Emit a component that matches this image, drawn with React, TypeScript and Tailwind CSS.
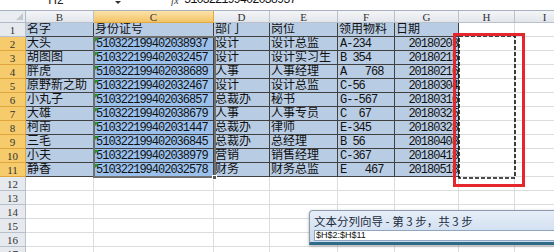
const letters = ["B", "C", "D", "E", "F", "G", "H", "I"];
const titles = ["名字", "身份证号", "部门", "岗位", "领用物料", "日期"];

const rows = [
  ["大头", "510322199402038937", "设计", "设计总监", "A-234", "20180203"],
  ["胡图图", "510322199402032457", "设计", "设计实习生", "B 354", "20180215"],
  ["胖虎", "510322199402038689", "人事", "人事经理", "A   768", "20180216"],
  ["原野新之助", "510322199402032467", "设计", "设计总监", "C-56", "20180304"],
  ["小丸子", "510322199402036857", "总裁办", "秘书", "G--567", "20180316"],
  ["大雄", "510322199402038679", "人事", "人事专员", "C  67", "20180325"],
  ["柯南", "510322199402031447", "总裁办", "律师", "E-345", "20180328"],
  ["三毛", "510322199402036845", "总裁办", "总经理", "B 56", "20180408"],
  ["小夫", "510322199402038979", "营销", "销售经理", "C-367", "20180418"],
  ["静香", "510322199402032578", "财务", "财务总监", "E   467", "20180518"],
];

const rowNums = Array.from({ length: 17 }, (_, i) => i + 1);

function cellValue(r: number, c: number) {
  if (c > 5) return "";
  if (r === 1) return titles[c];
  if (r <= 11) return rows[r - 2][c];
  return "";
}

export default function App() {
  return (
    <div className="relative w-[554px] h-[252px] overflow-hidden bg-white font-['Liberation_Mono','Noto_Sans_CJK_SC',monospace] text-[#111]">
      {/* formula bar, scrolled so only its lower edge shows */}
      <div className="flex h-[11px] overflow-hidden border-b border-[#a7b1be] bg-white">
        <div className="w-[112px] text-center text-[12px] leading-[12px] -mt-[6px] font-['Liberation_Sans',sans-serif] text-[#222]">
          H2
        </div>
        <div className="w-[12px] flex justify-center">
          <div className="mt-[1px] w-0 h-0 border-l-[3px] border-r-[3px] border-t-[3px] border-l-transparent border-r-transparent border-t-[#333]" />
        </div>
        <div className="w-[27px] h-[9px] -mt-[10px] rounded-b-full bg-gradient-to-b from-[#f2f2f2] to-[#c9ced6] border border-[#b5bcc6]" />
        <div className="w-[20px]" />
        <div className="w-[13px] text-[11px] leading-[11px] -mt-[5px] italic font-['Liberation_Serif',serif] text-[#444]">
          fx
        </div>
        <div className="flex-1 text-[12px] leading-[12px] -mt-[6px] tracking-[-1px]">
          510322199402038937
        </div>
      </div>

      {/* sheet grid */}
      <div className="grid grid-cols-[26px_68px_120px_56px_68px_57px_64px_56px_60px] grid-rows-[12px_repeat(17,14px)]">
        <div className="relative border-r border-b border-[#b1bac6] bg-[#e9ecf0]">
          <div className="absolute right-[2px] bottom-[2px] w-0 h-0 border-b-[7px] border-l-[7px] border-b-[#c3c9d1] border-l-transparent" />
        </div>
        {letters.map((l) =>
          l === "C" ? (
            <div
              key={l}
              className="border-r border-b border-[#e2a93f] bg-gradient-to-b from-[#fbe2a8] to-[#f3c466] text-center text-[11px] leading-[12px] font-['Liberation_Serif',serif] text-[#333]"
            >
              {l}
            </div>
          ) : (
            <div
              key={l}
              className="border-r border-b border-[#b8c0cb] bg-gradient-to-b from-[#f4f5f7] to-[#e2e6eb] text-center text-[11px] leading-[12px] font-['Liberation_Serif',serif] text-[#333]"
            >
              {l}
            </div>
          )
        )}

        {rowNums.map((r) => (
          <Row key={r} r={r} />
        ))}
      </div>

      {/* selection frame on C2:C11 */}
      <div className="absolute left-[93px] top-[36px] w-[123px] h-[142px] border-2 border-[#6f6f6f]" />
      <div className="absolute left-[212px] top-[175px] w-[5px] h-[5px] bg-[#555] border border-white" />

      {/* copy marquee on H2:H11 */}
      <svg className="absolute left-[458px] top-[35px]" width="58" height="144">
        <rect x="1" y="1" width="56" height="142" fill="none" stroke="#111" strokeWidth="1.6" strokeDasharray="4 2" />
      </svg>

      {/* red highlight box */}
      <div className="absolute left-[453px] top-[33px] w-[72px] h-[154px] border-[3px] border-[#e5262c]" />

      {/* wizard dialog */}
      <div className="absolute left-[309px] top-[210px] w-[260px] h-[35px] rounded-t-[4px] border border-[#8d9aab] border-b-[3px] border-b-[#2f6a86] bg-gradient-to-b from-[#e6eef8] to-[#c9d9ee] shadow-[0_1px_3px_rgba(0,0,0,0.35)] px-[4px]">
        <div className="h-[19px] pt-[3px] text-[11.5px] leading-[14px] font-['Noto_Sans_CJK_SC',sans-serif] text-[#1b2a3d]">
          文本分列向导 - 第 3 步，共 3 步
        </div>
        <div className="h-[11px] bg-white border border-[#8fa6c0] text-[9px] leading-[9px] pl-[1px] font-['Liberation_Sans',sans-serif] text-[#111]">
          $H$2:$H$11
        </div>
      </div>
    </div>
  );
}

function Row({ r }: { r: number }) {
  const hot = r >= 2 && r <= 11;
  return (
    <>
      {hot ? (
        <div className="border-r border-b border-[#e0a53c] bg-[#f6cb6c] text-center text-[11px] leading-[14px] font-['Liberation_Serif',serif] text-[#333]">
          {r}
        </div>
      ) : (
        <div className="border-r border-b border-[#b8c0cb] bg-[#e6eaef] text-center text-[11px] leading-[14px] font-['Liberation_Serif',serif] text-[#333]">
          {r}
        </div>
      )}
      {letters.map((_, c) => {
        const data = r <= 11 && c <= 5;
        const sel = hot && c === 1;
        const v = cellValue(r, c);
        const narrow = r >= 2 && (c === 1 || c === 4 || c === 5);
        if (sel) {
          return (
            <div
              key={c}
              className="relative overflow-hidden whitespace-pre border-r border-b border-[#404040] bg-[#9ac0eb] pl-[2px] text-[12px] leading-[14px] tracking-[-1px]"
            >
              <div className="absolute left-[1px] top-[1px] w-0 h-0 border-t-[4px] border-r-[4px] border-t-[#1c9a1c] border-r-transparent" />
              {v}
            </div>
          );
        }
        if (data) {
          return (
            <div
              key={c}
              className={
                c === 5 && r >= 2
                  ? "overflow-hidden whitespace-pre border-r border-b border-[#404040] bg-[#b8cce4] text-right text-[12px] leading-[14px] tracking-[-1px]"
                  : narrow
                  ? "overflow-hidden whitespace-pre border-r border-b border-[#404040] bg-[#b8cce4] pl-[2px] text-[12px] leading-[14px] tracking-[-1px]"
                  : "overflow-hidden whitespace-pre border-r border-b border-[#404040] bg-[#b8cce4] pl-[1px] text-[12px] leading-[14px]"
              }
            >
              {v}
            </div>
          );
        }
        return <div key={c} className="border-r border-b border-[#dadcdd] bg-white" />;
      })}
    </>
  );
}
